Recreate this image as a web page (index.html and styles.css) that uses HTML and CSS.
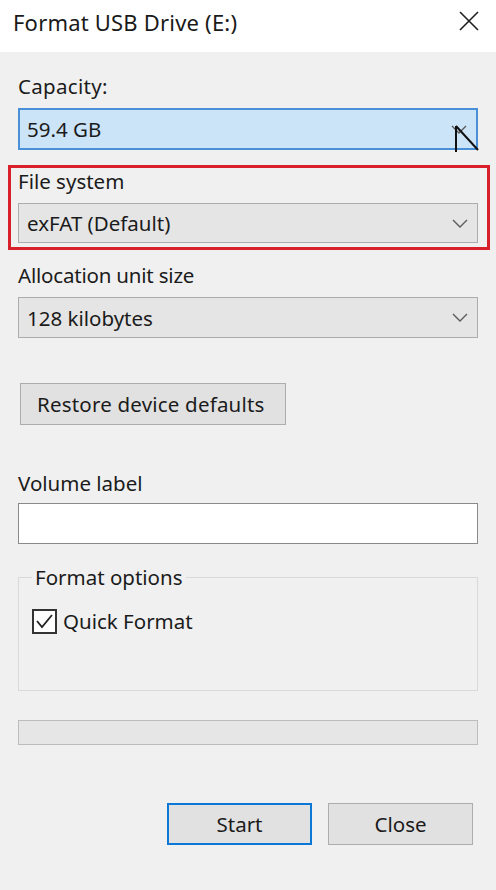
FILE: index.html
```html
<!DOCTYPE html>
<html lang="en">
<head>
<meta charset="utf-8">
<title>Format USB Drive (E:)</title>
<link rel="stylesheet" href="styles.css">
</head>
<body>
<div class="dialog">
  <div class="titlebar">
    <span class="title">Format USB Drive (E:)</span>
    <svg class="close" width="22" height="22" viewBox="0 0 22 22"><path d="M2 2 L20 20 M20 2 L2 20" stroke="#1f1f1f" stroke-width="1.6" fill="none"/></svg>
  </div>
  <div class="content">
    <div class="label lbl-capacity">Capacity:</div>
    <div class="combo combo-focus">
      <span>59.4 GB</span>
      <svg class="chev" width="16" height="9" viewBox="0 0 16 9"><path d="M1 1 L8 8 L15 1" stroke="#5a5a5a" stroke-width="1.4" fill="none"/></svg>
      <svg class="cursor" width="26" height="28" viewBox="0 0 26 28"><path d="M2 1 L2 27 M2 1 L24 25" stroke="#111" stroke-width="2" fill="none"/></svg>
    </div>
    <div class="highlight">
      <div class="label">File system</div>
      <div class="combo combo-fs">
        <span>exFAT (Default)</span>
        <svg class="chev" width="16" height="9" viewBox="0 0 16 9"><path d="M1 1 L8 8 L15 1" stroke="#5a5a5a" stroke-width="1.4" fill="none"/></svg>
      </div>
    </div>
    <div class="label lbl-alloc">Allocation unit size</div>
    <div class="combo combo-alloc">
      <span>128 kilobytes</span>
      <svg class="chev" width="16" height="9" viewBox="0 0 16 9"><path d="M1 1 L8 8 L15 1" stroke="#5a5a5a" stroke-width="1.4" fill="none"/></svg>
    </div>
    <div class="btn btn-restore">Restore device defaults</div>
    <div class="label lbl-volume">Volume label</div>
    <div class="textbox"></div>
    <fieldset class="group">
      <legend>Format options</legend>
      <div class="check-row">
        <span class="checkbox"><svg width="21" height="21" viewBox="0 0 21 21"><path d="M3 10 L8 16 L18 4" stroke="#222" stroke-width="1.8" fill="none"/></svg></span>
        <span class="check-text">Quick Format</span>
      </div>
    </fieldset>
    <div class="progress"></div>
    <div class="buttons">
      <div class="btn btn-start">Start</div>
      <div class="btn btn-close">Close</div>
    </div>
  </div>
</div>
</body>
</html>
```

FILE: styles.css
```css
* { box-sizing: border-box; }
html, body { margin: 0; padding: 0; }
body {
  width: 496px;
  height: 890px;
  overflow: hidden;
  background: #f0f0f0;
  font-family: "Noto Sans", "Open Sans", sans-serif;
  font-size: 20.5px;
  color: #1b1b1b;
}
.dialog { width: 496px; height: 890px; background: #f0f0f0; }
.titlebar {
  height: 52px;
  background: #ffffff;
  padding: 10px 16px 0 13px;
  display: flex;
  justify-content: space-between;
  align-items: flex-start;
  line-height: 24px;
}
.title { color: #1a1a1a; font-size: 22px; letter-spacing: 0.2px; }
.close { margin-top: 0; }
.content { padding: 0 18px; display: flex; flex-direction: column; }
.label { line-height: 24px; height: 24px; }
.lbl-capacity { margin-top: 22px; letter-spacing: 0.3px; }
.combo {
  margin-top: 10px;
  height: 41px;
  border: 1px solid #acacac;
  background: #e5e5e5;
  display: flex;
  align-items: center;
  justify-content: space-between;
  padding: 0 9px 0 8px;
  position: relative;
}
.combo span { line-height: 24px; }
.combo-focus {
  height: 42px;
  border: 2px solid #4a90d9;
  background: #cce4f7;
  padding-left: 7px;
}
.chev { display: block; }
.cursor { position: absolute; right: -4px; top: 15px; }
.highlight {
  margin: 15px -12px 0 -10px;
  border: 3px solid #d7202b;
  padding: 1px 9px 4px 7px;
}
.combo-fs { height: 40px; }
.lbl-alloc { margin-top: 13px; letter-spacing: -0.2px; }
.btn {
  border: 1px solid #adadad;
  background: #e1e1e1;
  height: 42px;
  display: flex;
  align-items: center;
  line-height: 24px;
}
.btn-restore {
  margin-top: 45px;
  margin-left: 2px;
  width: 266px;
  padding-left: 16px;
  letter-spacing: 0.2px;
}
.lbl-volume { margin-top: 46px; }
.textbox {
  margin-top: 8px;
  height: 41px;
  background: #ffffff;
  border: 1px solid #8a8a8a;
}
.group {
  margin: 18px 0 0 0;
  padding: 0 13px 56px 13px;
  border: 1px solid #d9d9d9;
  min-width: 0;
}
.group legend {
  padding: 0 3px;
  line-height: 30px;
  margin-left: 0;
}
.check-row {
  margin-top: 16px;
  display: flex;
  align-items: center;
  height: 26px;
}
.checkbox {
  width: 25px;
  height: 25px;
  border: 2px solid #333333;
  background: #ffffff;
  display: flex;
  align-items: center;
  justify-content: center;
}
.check-text { margin-left: 6px; line-height: 24px; }
.progress {
  margin-top: 29px;
  height: 25px;
  background: #e6e6e6;
  border: 1px solid #bcbcbc;
}
.buttons {
  margin-top: 58px;
  display: flex;
  justify-content: flex-end;
  gap: 16px;
  padding-right: 5px;
}
.buttons .btn { width: 145px; justify-content: center; }
.btn-start { border: 2px solid #0a78d4; }
```
